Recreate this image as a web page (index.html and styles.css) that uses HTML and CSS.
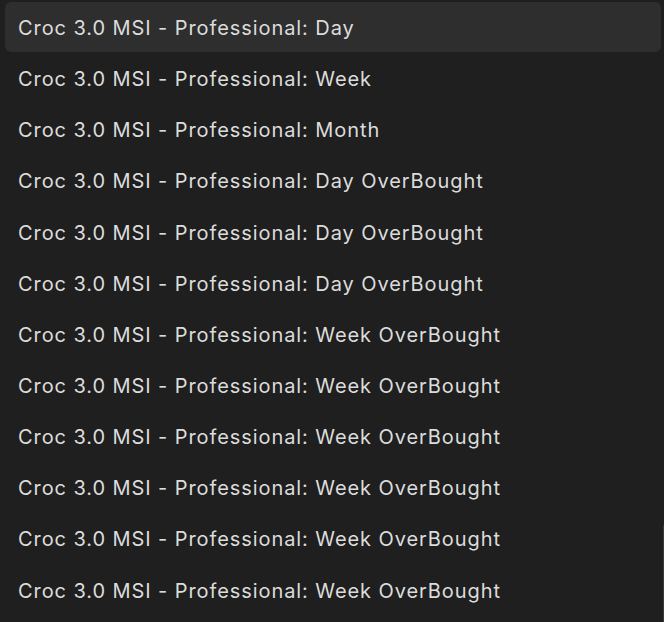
FILE: index.html
```html
<!DOCTYPE html>
<html>
<head>
<meta charset="utf-8">
<link rel="stylesheet" href="styles.css">
</head>
<body>
<div class="list">
  <div class="item active">Croc 3.0 MSI - Professional: Day</div>
  <div class="item">Croc 3.0 MSI - Professional: Week</div>
  <div class="item">Croc 3.0 MSI - Professional: Month</div>
  <div class="item">Croc 3.0 MSI - Professional: Day OverBought</div>
  <div class="item">Croc 3.0 MSI - Professional: Day OverBought</div>
  <div class="item">Croc 3.0 MSI - Professional: Day OverBought</div>
  <div class="item">Croc 3.0 MSI - Professional: Week OverBought</div>
  <div class="item">Croc 3.0 MSI - Professional: Week OverBought</div>
  <div class="item">Croc 3.0 MSI - Professional: Week OverBought</div>
  <div class="item">Croc 3.0 MSI - Professional: Week OverBought</div>
  <div class="item">Croc 3.0 MSI - Professional: Week OverBought</div>
  <div class="item">Croc 3.0 MSI - Professional: Week OverBought</div>
</div>
<div class="scrollbar"></div>
</body>
</html>
```
FILE: styles.css
```css
html, body {
  margin: 0;
  padding: 0;
  background: #1f1f1f;
  height: 100%;
  overflow: hidden;
}
body {
  font-family: Inter, "Noto Sans", sans-serif;
}
.list {
  display: flex;
  flex-direction: column;
  padding: 2px 3px 0 5px;
}
.item {
  height: 51.15px;
  box-sizing: border-box;
  display: flex;
  align-items: center;
  padding-left: 13px;
  padding-top: 1px;
  font-size: 20px;
  letter-spacing: 0.92px;
  color: #dcdcdc;
  border-radius: 6px;
  white-space: nowrap;
}
.item.active {
  background: #2e2e2e;
  height: 50.15px;
  margin-bottom: 1px;
}
.scrollbar {
  position: absolute;
  right: 0;
  top: 525px;
  width: 1px;
  height: 97px;
  background: #3a3a3a;
}
```
